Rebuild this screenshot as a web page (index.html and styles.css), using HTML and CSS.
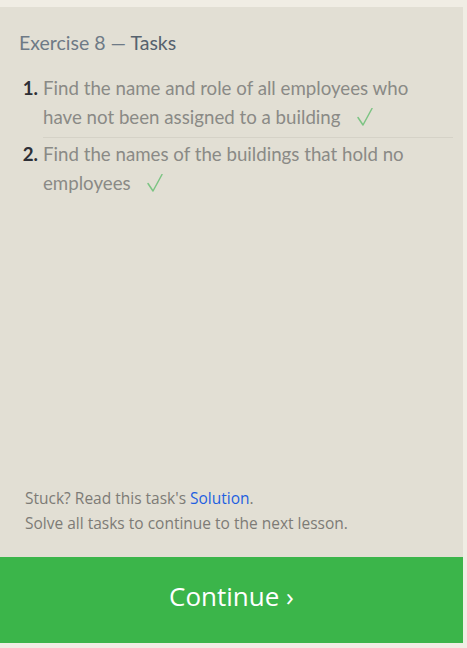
FILE: index.html
```html
<!DOCTYPE html>
<html>
<head>
<meta charset="utf-8">
<link rel="stylesheet" href="styles.css">
</head>
<body>
<div class="page">
  <div class="panel">
    <div class="content">
      <h2 class="title">Exercise 8 — <span class="title-strong">Tasks</span></h2>
      <ol class="tasks">
        <li class="task"><span class="num">1.</span><span class="task-text"><span class="task-label">Find the name and role of all employees who have not been assigned to a building <svg class="check" width="16" height="18" viewBox="0 0 16 18"><path d="M1 9.5 L6 17 L15 0.5" fill="none" stroke="#7cc483" stroke-width="1.5" stroke-linecap="round" stroke-linejoin="round"/></svg></span></span></li>
        <li class="task"><span class="num">2.</span><span class="task-text"><span class="task-label">Find the names of the buildings that hold no employees <svg class="check" width="16" height="18" viewBox="0 0 16 18"><path d="M1 9.5 L6 17 L15 0.5" fill="none" stroke="#7cc483" stroke-width="1.5" stroke-linecap="round" stroke-linejoin="round"/></svg></span></span></li>
      </ol>
    </div>
    <div class="footer-text">
      <div>Stuck? Read this task's <a class="link" href="#">Solution</a>.</div>
      <div>Solve all tasks to continue to the next lesson.</div>
    </div>
    <div class="continue">Continue ›</div>
  </div>
</div>
</body>
</html>
```

FILE: styles.css
```css
html, body {
  margin: 0;
  padding: 0;
  background: #f0ede4;
}
.page {
  width: 467px;
  height: 648px;
  padding-top: 7px;
  box-sizing: border-box;
}
.panel {
  width: 463px;
  height: 636px;
  background: #e2dfd4;
  display: flex;
  flex-direction: column;
}
.content {
  flex: 1;
  padding: 25px 10px 0 19px;
}
.title {
  margin: 0;
  font-family: Lato, "Open Sans", sans-serif;
  font-weight: 400;
  font-size: 19.5px;
  line-height: 22px;
  color: #6e7a86;
}
.title-strong {
  color: #56626e;
}
.tasks {
  list-style: none;
  margin: 20px 0 0 0;
  padding: 0;
}
.task {
  display: flex;
  font-family: Lato, "Open Sans", sans-serif;
  font-size: 18.7px;
  line-height: 29px;
  color: #8a8a86;
}
.num {
  width: 19px;
  flex: none;
  text-align: right;
  margin-right: 5px;
  color: #2d2f36;
  font-weight: 700;
}
.task-text {
  flex: 1;
}
.task-label {
  display: block;
  margin-right: 30px;
}
.task + .task {
  margin-top: 2px;
}
.task:first-child .task-text {
  border-bottom: 1px solid #d5d2c7;
  padding-bottom: 5px;
}
.check {
  margin-left: 12px;
  vertical-align: -2px;
}
.footer-text {
  padding: 0 0 21px 25px;
  font-family: "Open Sans", sans-serif;
  font-size: 15.5px;
  line-height: 25px;
  color: #7d7b76;
}
.link {
  color: #1f5fe0;
  text-decoration: none;
}
.continue {
  height: 86px;
  box-sizing: border-box;
  padding-bottom: 9px;
  background: #3bb54a;
  color: #ffffff;
  font-family: "Open Sans", sans-serif;
  font-size: 26px;
  display: flex;
  align-items: center;
  justify-content: center;
}
```
